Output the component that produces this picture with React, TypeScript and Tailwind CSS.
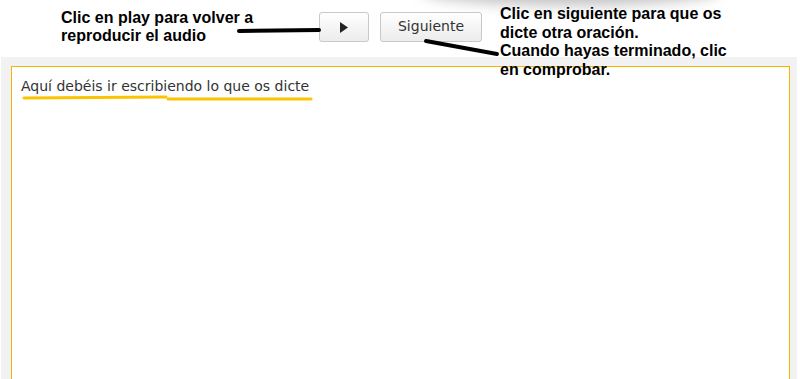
import React from "react";

const note = "font-['Liberation_Sans',Arial,sans-serif] font-bold text-[16px] text-black";

export default function App() {
  return (
    <div className="relative w-[800px] h-[379px] overflow-hidden bg-white">
      {/* top bar with buttons */}
      <div className="relative h-[57px]">
        <div className="absolute left-[420px] -top-[25px] w-[300px] h-[30px] rounded-[50%] bg-black/25 blur-[7px]" />
        <div className="relative flex items-start gap-[11px] pl-[319px] pt-[12px]">
          <button className="flex items-center justify-center w-[50px] h-[30px] rounded-[3px] border border-[#c8c8c8] bg-gradient-to-b from-white to-[#ececec]">
            <svg width="8" height="11" viewBox="0 0 8 11">
              <path d="M0 0 L8 5.5 L0 11 Z" fill="#222" />
            </svg>
          </button>
          <button className="w-[102px] h-[30px] rounded-[3px] border border-[#c8c8c8] bg-gradient-to-b from-white to-[#ececec] font-['DejaVu_Sans',Verdana,sans-serif] text-[14px] text-[#333] pb-[1px]">
            Siguiente
          </button>
        </div>
      </div>

      {/* writing panel */}
      <div className="ml-[1px] w-[796px] h-[322px] bg-[#f2f2f2] pt-[9px] pl-[10px]">
        <div className="w-[779px] h-[330px] bg-white border border-[#f5b400] pl-[9px] pt-[10px]">
          <p className="font-['DejaVu_Sans',Verdana,sans-serif] text-[14px] leading-[18px] text-[#333]">
            Aquí debéis ir escribiendo lo que os dicte
          </p>
        </div>
      </div>

      {/* annotations */}
      <div className={`absolute left-[61px] top-[9px] leading-[18px] ${note}`}>
        <p>Clic en play para volver a</p>
        <p>reproducir el audio</p>
      </div>
      <div className={`absolute left-[500px] top-[5px] leading-[18.7px] ${note}`}>
        <p>Clic en siguiente para que os</p>
        <p>dicte otra oración.</p>
        <p>Cuando hayas terminado, clic</p>
        <p>en comprobar.</p>
      </div>

      <svg className="absolute left-0 top-0 pointer-events-none" width="800" height="379">
        <path d="M239 31 L319 30" stroke="#000" strokeWidth="4" strokeLinecap="round" />
        <path d="M426 41 L497 54" stroke="#000" strokeWidth="4" strokeLinecap="round" />
        <path d="M24 98 L166 97" stroke="#fcc400" strokeWidth="3" strokeLinecap="round" />
        <path d="M168 99 L311 99" stroke="#fcc400" strokeWidth="3" strokeLinecap="round" />
      </svg>
    </div>
  );
}
